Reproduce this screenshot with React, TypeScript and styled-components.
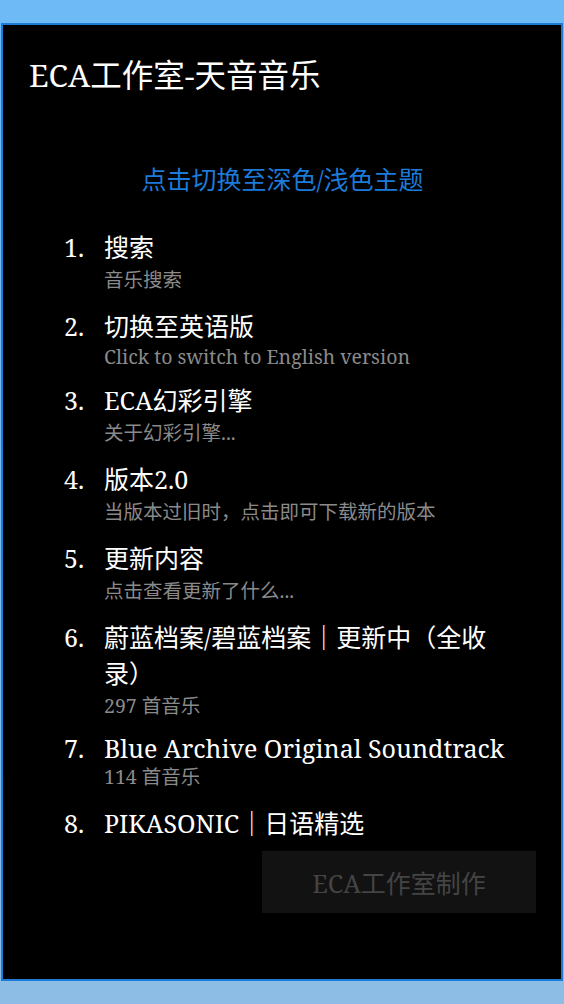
import React from "react";
import styled, { createGlobalStyle } from "styled-components";

const GlobalStyle = createGlobalStyle`
  html, body {
    margin: 0;
    padding: 0;
  }
  body {
    min-height: 1004px;
    background: linear-gradient(180deg, #6dbaf6 0%, #7cbcee 60%, #8dbde4 100%);
    font-family: "Noto Serif", "DejaVu Serif", "Noto Sans CJK SC", serif;
  }
`;

const Page = styled.div`
  padding: 23px 1px;
`;

const Panel = styled.main`
  box-sizing: border-box;
  height: 958px;
  border: 2px solid #1c7ad8;
  background: #000;
  padding: 30px 25px 0 26px;
  display: flex;
  flex-direction: column;
`;

const Heading = styled.h1`
  margin: 0;
  font-size: 31.5px;
  font-weight: normal;
  line-height: 40px;
  color: #fff;
`;

const ThemeLink = styled.a`
  display: block;
  margin-top: 66px;
  text-align: center;
  font-size: 25px;
  line-height: 36px;
  color: #1c7bd9;
  text-decoration: none;
  cursor: pointer;
`;

const List = styled.ol`
  list-style: none;
  margin: 32px 26px 0 35px;
  padding: 0;
  display: flex;
  flex-direction: column;
  gap: 14px;
`;

// latin-only lines sit in a shorter line box than lines holding CJK glyphs
const Item = styled.li<{ $latin?: boolean }>`
  display: grid;
  grid-template-columns: 40px 1fr;
  color: #fff;
  font-size: 25px;
  line-height: ${(p) => (p.$latin ? "28px" : "36px")};
  cursor: pointer;
`;

const Num = styled.span``;

const Body = styled.div`
  display: flex;
  flex-direction: column;
`;

const ItemTitle = styled.div``;

const ItemSub = styled.div<{ $latin?: boolean }>`
  margin-top: 1px;
  font-size: 19.5px;
  line-height: ${(p) => (p.$latin ? "23px" : "28px")};
  color: #8a8a8a;
`;

const Footer = styled.div`
  display: flex;
  justify-content: flex-end;
  margin-top: 10px;
`;

const MadeBy = styled.button`
  width: 274px;
  height: 62px;
  border: none;
  background: #121212;
  color: #444;
  font-family: inherit;
  font-size: 25px;
  cursor: pointer;
`;

const items: { title: string; sub?: string }[] = [
  { title: "搜索", sub: "音乐搜索" },
  { title: "切换至英语版", sub: "Click to switch to English version" },
  { title: "ECA幻彩引擎", sub: "关于幻彩引擎..." },
  { title: "版本2.0", sub: "当版本过旧时，点击即可下载新的版本" },
  { title: "更新内容", sub: "点击查看更新了什么..." },
  { title: "蔚蓝档案/碧蓝档案｜更新中（全收录）", sub: "297 首音乐" },
  { title: "Blue Archive Original Soundtrack", sub: "114 首音乐" },
  { title: "PIKASONIC｜日语精选" },
];

const isLatin = (s: string) => /^[\x20-\x7e]+$/.test(s);

export default function App() {
  return (
    <>
      <GlobalStyle />
      <Page>
        <Panel>
          <Heading>ECA工作室-天音音乐</Heading>
          <ThemeLink>点击切换至深色/浅色主题</ThemeLink>
          <List>
            {items.map((it, i) => (
              <Item key={i} $latin={isLatin(it.title)}>
                <Num>{i + 1}.</Num>
                <Body>
                  <ItemTitle>{it.title}</ItemTitle>
                  {it.sub && <ItemSub $latin={isLatin(it.sub)}>{it.sub}</ItemSub>}
                </Body>
              </Item>
            ))}
          </List>
          <Footer>
            <MadeBy>ECA工作室制作</MadeBy>
          </Footer>
        </Panel>
      </Page>
    </>
  );
}
